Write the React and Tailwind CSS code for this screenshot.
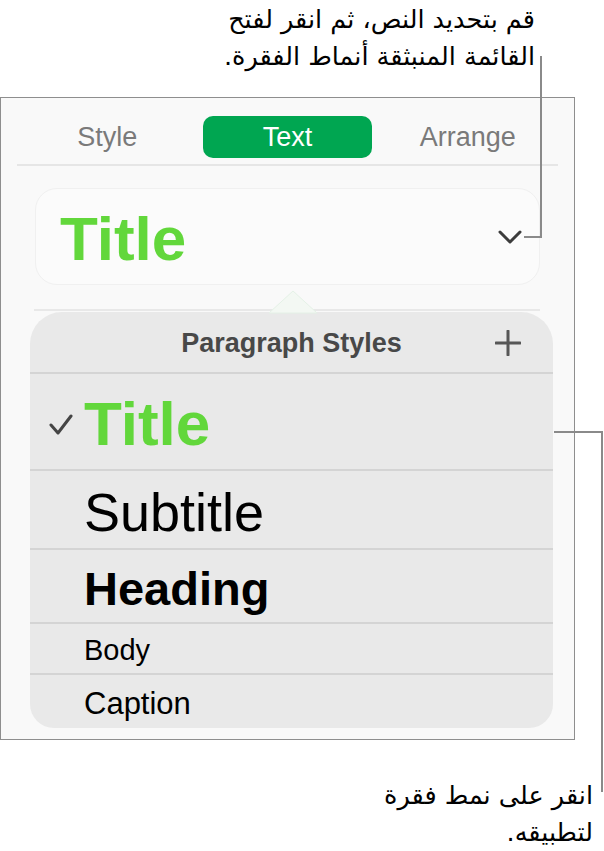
import React from 'react';

const sans = { fontFamily: '"Liberation Sans", Arial, sans-serif' };
const arabic = { fontFamily: '"DejaVu Sans", "Noto Sans", sans-serif' };

const tabs = ['Style', 'Text', 'Arrange'];

const styles = [
  { name: 'Title', h: 'h-[97px]', cls: 'text-[62px] font-bold text-[#62d73b]', checked: true },
  { name: 'Subtitle', h: 'h-[79px]', cls: 'text-[54px] text-black' },
  { name: 'Heading', h: 'h-[74px]', cls: 'text-[47px] font-bold text-black' },
  { name: 'Body', h: 'h-[51px]', cls: 'text-[29px] text-black' },
  { name: 'Caption', h: 'h-[55px]', cls: 'text-[31px] text-black' },
];

const Callouts = () => (
  <svg className="absolute inset-0 pointer-events-none" width="604" height="851" viewBox="0 0 604 851">
    <path d="M541 56 V237 H524" fill="none" stroke="#8a8a8a" strokeWidth="2" />
    <path d="M554 432 H602 V792" fill="none" stroke="#8a8a8a" strokeWidth="2" />
  </svg>
);

const App = () => {
  return (
    <div className="relative w-[604px] h-[851px] bg-white overflow-hidden" style={sans}>
      <div dir="rtl" className="h-[97px] pr-[69px] pt-[1px] text-right text-[25.5px] leading-[37px] text-black" style={arabic}>
        <p>قم بتحديد النص، ثم انقر لفتح</p>
        <p>القائمة المنبثقة أنماط الفقرة.</p>
      </div>

      <div className="w-[575px] h-[643px] border border-[#8e8e8e] bg-[#f9f9f9] pt-[18px]">
        <div className="mx-[16px] grid grid-cols-3 h-[42px]">
          {tabs.map((t) =>
            t === 'Text' ? (
              <div key={t} className="mx-[6px] rounded-[10px] bg-[#00a651] flex items-center justify-center text-[27px] text-white">
                {t}
              </div>
            ) : (
              <div key={t} className="flex items-center justify-center text-[27px] text-[#7a7a7a]">
                {t}
              </div>
            )
          )}
        </div>
        <div className="mx-[16px] mt-[6px] h-[2px] bg-[#e6e6e6]" />

        <div className="mx-[34px] mt-[22px] h-[97px] rounded-[22px] border border-[#f0f0f0] bg-[#fbfbfb] flex items-center justify-between pl-[24px] pr-[17px]">
          <span className="text-[62px] font-bold leading-none text-[#62d73b] pt-[4px]">Title</span>
          <svg width="24" height="14" viewBox="0 0 24 14">
            <polyline points="2,2 12,12 22,2" fill="none" stroke="#3c3c3c" strokeWidth="3" strokeLinecap="round" strokeLinejoin="round" />
          </svg>
        </div>
        <div className="ml-[33px] mr-[34px] mt-[24px] h-[2px] bg-[#e8e8e8]" />

        <div className="relative ml-[29px] w-[523px] h-[416px] mt-[1px] bg-[#e9e9e9] rounded-t-[32px] rounded-b-[24px] flex flex-col">
          <svg className="absolute left-[239px] top-[-22px]" width="48" height="24" viewBox="0 0 48 24">
            <path d="M0 23 L24 1 L48 23 Z" fill="#f3f8f3" stroke="#e4f1e6" strokeWidth="1" />
          </svg>
          <div className="relative h-[60px] flex items-center justify-center">
            <span className="text-[27px] font-bold text-[#484848] pt-[2px]">Paragraph Styles</span>
            <svg className="absolute right-[32px] top-[18px]" width="26" height="26" viewBox="0 0 26 26">
              <path d="M13 1 V25 M1 13 H25" stroke="#575757" strokeWidth="3" strokeLinecap="round" />
            </svg>
          </div>
          {styles.map((s) => (
            <div key={s.name} className={`${s.h} border-t-2 border-[#d4d4d4] flex items-center relative pl-[54px]`}>
              {s.checked && (
                <svg className="absolute left-[19px] top-[40px]" width="24" height="22" viewBox="0 0 24 22">
                  <polyline points="2,11 9,19 22,2" fill="none" stroke="#454545" strokeWidth="3" strokeLinecap="round" strokeLinejoin="round" />
                </svg>
              )}
              <span className={`${s.cls} leading-none pt-[4px]`}>{s.name}</span>
            </div>
          ))}
        </div>
      </div>

      <div dir="rtl" className="pr-[11px] pt-[37px] text-right text-[25.5px] leading-[37px] text-black" style={arabic}>
        <p>انقر على نمط فقرة</p>
        <p>لتطبيقه.</p>
      </div>

      <Callouts />
    </div>
  );
};

export default App;
